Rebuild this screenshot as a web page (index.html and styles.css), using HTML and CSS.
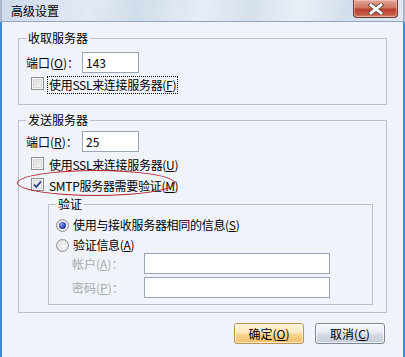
FILE: index.html
```html
<!DOCTYPE html>
<html lang="zh-CN">
<head>
  <meta charset="UTF-8">
  <title>高级设置</title>
  <link rel="stylesheet" href="styles.css">
</head>
<body>

  <div class="window">
    <div class="titlebar">
      <span class="title">高级设置</span>
      <button class="close-btn" type="button">
        <svg width="16" height="12" viewBox="0 0 16 12">
          <path d="M3 2 L13 10 M13 2 L3 10" stroke="#6a4a44" stroke-width="4.6" stroke-linecap="square"/>
          <path d="M3 2 L13 10 M13 2 L3 10" stroke="#ffffff" stroke-width="2.8" stroke-linecap="square"/>
        </svg>
      </button>
    </div>

    <div class="client">
      <fieldset class="group group-recv">
        <legend>收取服务器</legend>
        <div class="field-row">
          <label class="field-label">端口(<u>O</u>)：</label>
          <div class="textbox port">143</div>
        </div>
        <div class="check-row">
          <span class="checkbox"></span>
          <span class="check-text focused">使用SSL来连接服务器(<u>F</u>)</span>
        </div>
      </fieldset>

      <fieldset class="group group-send">
        <legend>发送服务器</legend>
        <div class="field-row">
          <label class="field-label">端口(<u>R</u>)：</label>
          <div class="textbox port">25</div>
        </div>
        <div class="check-row ssl-row">
          <span class="checkbox"></span>
          <span class="check-text">使用SSL来连接服务器(<u>U</u>)</span>
        </div>
        <div class="check-row smtp-row">
          <span class="checkbox checked">
            <svg width="11" height="11" viewBox="0 0 11 11">
              <path d="M2 5.5 L4.3 8 L9 2.5" fill="none" stroke="#23379a" stroke-width="1.8"/>
            </svg>
          </span>
          <span class="check-text">SMTP服务器需要验证(<u>M</u>)</span>
          <span class="ring"></span>
        </div>

        <fieldset class="group group-auth">
          <legend>验证</legend>
          <div class="radio-row">
            <span class="radio checked"></span>
            <span class="check-text">使用与接收服务器相同的信息(<u>S</u>)</span>
          </div>
          <div class="radio-row second">
            <span class="radio"></span>
            <span class="check-text">验证信息(<u>A</u>)</span>
          </div>
          <div class="field-row cred disabled">
            <label class="field-label wide">帐户(<u>A</u>)：</label>
            <div class="textbox long"></div>
          </div>
          <div class="field-row cred disabled pass">
            <label class="field-label wide">密码(<u>P</u>)：</label>
            <div class="textbox long"></div>
          </div>
        </fieldset>
      </fieldset>

      <div class="buttons">
        <button class="btn btn-default" type="button">确定(<u>O</u>)</button>
        <button class="btn" type="button">取消(<u>C</u>)</button>
      </div>
    </div>
  </div>

</body>
</html>
```

FILE: styles.css
```css
/* Reset */
* {
  margin: 0;
  padding: 0;
  box-sizing: border-box;
}

body {
  font-family: "Noto Sans CJK SC", "Noto Sans", sans-serif;
  font-size: 12px;
  color: #000;
  background: #f0f4fa;
  width: 405px;
  height: 357px;
  overflow: hidden;
}

u { text-decoration: underline; text-underline-offset: 1px; }

.window {
  width: 405px;
  height: 357px;
  background: #f0f4fa;
}

/* Title bar */
.titlebar {
  height: 22px;
  display: flex;
  align-items: flex-start;
  justify-content: space-between;
  padding: 0 5px 0 9px;
  border-bottom: 1px solid #92a6c0;
  border-left: 2px solid #a9b8cb;
  border-right: 2px solid #a9b8cb;
  background: linear-gradient(100deg, #cfdaea 0%, #e2eaf4 22%, #d2ddeb 34%, #e6edf6 50%, #d6e0ed 62%, #eaf0f7 74%, #d3deec 86%, #dfe7f2 100%);
}

.title {
  line-height: 22px;
  font-size: 12px;
}

.close-btn {
  width: 45px;
  height: 18px;
  border: 1px solid #6b3a36;
  border-top: none;
  border-radius: 0 0 4px 4px;
  background: linear-gradient(#e3a89a 0%, #cf7560 45%, #b8402c 55%, #c65a44 85%, #d88a74 100%);
  display: flex;
  align-items: center;
  justify-content: center;
  box-shadow: inset 0 0 0 1px rgba(255, 220, 210, 0.45);
}

/* Client area */
.client {
  height: 335px;
  padding: 8px 16px 0 16px;
  border-left: 2px solid #3f88d6;
  border-right: 2px solid #3f88d6;
}

/* Group boxes */
.group {
  border: 1px solid #bcc3cc;
  padding: 6px 7px 10px 7px;
  min-width: 0;
}

.group legend {
  padding: 0 2px;
  line-height: 16px;
}

.group-send {
  margin-top: 7px;
  padding-top: 3px;
  padding-bottom: 7px;
}

.group-auth {
  margin: 1px 6px 0 22px;
  padding: 5px 7px 6px 7px;
}

/* Rows */
.field-row {
  display: flex;
  align-items: center;
  height: 21px;
}

.field-label {
  width: 56px;
  line-height: 16px;
}

.field-label.wide {
  width: 72px;
}

.textbox {
  height: 21px;
  border: 1px solid #98a6b8;
  background: #fff;
  padding: 0 3px;
  line-height: 19px;
}

.textbox.port { width: 57px; }
.textbox.long { width: 186px; }

.check-row {
  display: flex;
  align-items: flex-start;
  height: 18px;
  margin-top: 3px;
  padding-left: 5px;
  position: relative;
}

.ssl-row { margin-top: 4px; }
.smtp-row { margin-top: 3px; }

.checkbox {
  width: 13px;
  height: 13px;
  margin-top: 1px;
  border: 1px solid #8e8f8f;
  background: linear-gradient(135deg, #d9dadb, #f4f4f4);
  box-shadow: inset 0 0 0 1px #f6f6f6, inset 0 0 0 2px #d6d7d8;
  display: flex;
  align-items: center;
  justify-content: center;
}

.checkbox.checked {
  background: linear-gradient(135deg, #e4e5e6, #fafafa);
}

.check-text {
  margin-left: 3px;
  line-height: 16px;
  padding: 0 1px;
  letter-spacing: -0.3px;
  border: 1px solid transparent;
}

.check-text.focused {
  border: 1px dotted #000;
}

/* Annotation ring */
.ring {
  position: absolute;
  left: -9px;
  top: -7px;
  width: 158px;
  height: 26px;
  border: 1px solid #b5272b;
  border-radius: 50%;
  pointer-events: none;
}

/* Radios */
.radio-row {
  display: flex;
  align-items: center;
  height: 16px;
}

.radio-row.second {
  margin-top: 4px;
}

.radio {
  width: 13px;
  height: 13px;
  border-radius: 50%;
  border: 1px solid #8f9092;
  background: radial-gradient(circle at 60% 60%, #f6f6f6 0%, #d8d9da 100%);
  position: relative;
}

.radio.checked::after {
  content: "";
  position: absolute;
  left: 2px;
  top: 2px;
  width: 7px;
  height: 7px;
  border-radius: 50%;
  background: radial-gradient(circle at 35% 35%, #9aa6f0 0%, #3f4fc0 45%, #1e2a86 100%);
}

.radio-row .check-text {
  margin-left: 2px;
}

.cred {
  margin-left: 16px;
}

.cred.pass {
  margin-top: 3px;
}

.disabled .field-label {
  color: #a6a9ad;
}

/* Buttons */
.buttons {
  display: flex;
  justify-content: flex-end;
  gap: 11px;
  margin: 10px 2px 0 0;
}

.btn {
  width: 70px;
  height: 21px;
  font-family: inherit;
  font-size: 12px;
  color: #000;
  border: 1px solid #7d8899;
  border-radius: 3px;
  background: linear-gradient(#f6f8fb 0%, #e8ecf2 45%, #d5dbe4 55%, #c6ced9 100%);
  box-shadow: inset 0 0 0 1px rgba(255, 255, 255, 0.7);
}

.btn-default {
  border-color: #c0934a;
  background: linear-gradient(#fff6e2 0%, #fde8bc 45%, #f8d391 55%, #f2bf68 100%);
}
```
